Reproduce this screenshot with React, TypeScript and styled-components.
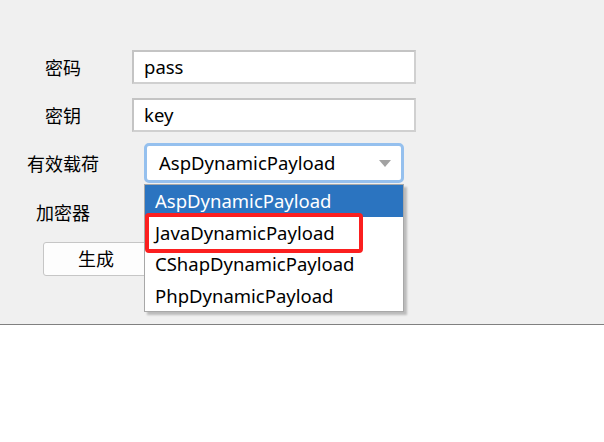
import React from 'react';
import styled, { createGlobalStyle } from 'styled-components';

const GlobalStyle = createGlobalStyle`
  html, body {
    margin: 0;
    padding: 0;
    background: #ffffff;
  }
  body {
    font-family: "Noto Sans", "Noto Sans CJK SC", sans-serif;
    color: #000;
  }
`;

const payloads = [
  'AspDynamicPayload',
  'JavaDynamicPayload',
  'CShapDynamicPayload',
  'PhpDynamicPayload',
];

export default function App() {
  return (
    <>
      <GlobalStyle />
      <Page>
        <Panel>
          <Form>
            <Row $top={50} $height={34}>
              <Label>密码</Label>
              <Input $left={6} defaultValue='pass' />
            </Row>
            <Row $top={14} $height={34}>
              <Label>密钥</Label>
              <Input $left={6} defaultValue='key' />
            </Row>
            <Row $top={11} $height={40}>
              <Label>有效载荷</Label>
              <ComboWrap>
                <Combo>
                  <ComboText>AspDynamicPayload</ComboText>
                  <Arrow />
                </Combo>
                <DropList>
                  {payloads.map((p, i) => (
                    <Item key={p} $active={i === 0}>
                      {p}
                    </Item>
                  ))}
                  <Marker />
                </DropList>
              </ComboWrap>
            </Row>
            <Row $top={12} $height={34}>
              <Label>加密器</Label>
            </Row>
            <Row $top={13} $height={34}>
              <Button>生成</Button>
            </Row>
          </Form>
        </Panel>
      </Page>
    </>
  );
}

const Page = styled.div`
  width: 604px;
  height: 442px;
  background: #ffffff;
  overflow: hidden;
`;

const Panel = styled.div`
  height: 324px;
  background: #f0f0f0;
  border-bottom: 1px solid #808080;
`;

const Form = styled.div`
  display: flex;
  flex-direction: column;
`;

const Row = styled.div<{ $top: number; $height: number }>`
  display: flex;
  align-items: center;
  margin-top: ${(p) => p.$top}px;
  height: ${(p) => p.$height}px;
`;

const Label = styled.div`
  width: 126px;
  text-align: center;
  font-family: "Noto Sans CJK SC", sans-serif;
  font-size: 18px;
  line-height: 24px;
`;

const Input = styled.input<{ $left: number }>`
  box-sizing: border-box;
  margin: 0 0 0 ${(p) => p.$left}px;
  width: 284px;
  height: 34px;
  padding: 0 0 2px 10px;
  border: 2px solid #d0d0d0;
  border-top-color: #c4c4c4;
  border-left-color: #c4c4c4;
  background: #ffffff;
  font-family: "Noto Sans", sans-serif;
  font-size: 18.5px;
  color: #000;
  outline: none;
`;

const ComboWrap = styled.div`
  position: relative;
  margin-left: 18px;
`;

const Combo = styled.div`
  box-sizing: border-box;
  width: 260px;
  height: 40px;
  border: 3px solid #95c0ee;
  border-radius: 5px;
  background: #ffffff;
  display: flex;
  align-items: center;
  justify-content: space-between;
  padding: 0 10px 2px 12px;
`;

const ComboText = styled.span`
  font-family: "Noto Sans", sans-serif;
  font-size: 18.5px;
`;

const Arrow = styled.span`
  width: 0;
  height: 0;
  border-left: 6.5px solid transparent;
  border-right: 6.5px solid transparent;
  border-top: 7px solid #a2a2a2;
  margin-top: 2px;
`;

const DropList = styled.div`
  position: absolute;
  top: 41px;
  left: 0;
  box-sizing: border-box;
  width: 260px;
  height: 128px;
  border: 1px solid #a8a8a8;
  background: #ffffff;
  box-shadow: 3px 3px 2px rgba(0, 0, 0, 0.22);
  z-index: 5;
`;

const Item = styled.div<{ $active: boolean }>`
  height: 31.5px;
  display: flex;
  align-items: center;
  padding-left: 10px;
  font-family: "Noto Sans", sans-serif;
  font-size: 18.5px;
  background: ${(p) => (p.$active ? '#2b74c0' : 'transparent')};
  color: ${(p) => (p.$active ? '#ffffff' : '#000000')};
`;

const Marker = styled.div`
  position: absolute;
  left: 0;
  top: 28px;
  width: 218px;
  height: 40px;
  box-sizing: border-box;
  border: 4px solid #fb1f1f;
  border-radius: 4px;
`;

const Button = styled.button`
  box-sizing: border-box;
  margin-left: 43px;
  width: 106px;
  height: 34px;
  border: 1px solid #c6c6c6;
  border-radius: 3px;
  background: #fdfdfd;
  font-family: "Noto Sans CJK SC", sans-serif;
  font-size: 18px;
  color: #000;
  padding: 0 0 2px;
`;
